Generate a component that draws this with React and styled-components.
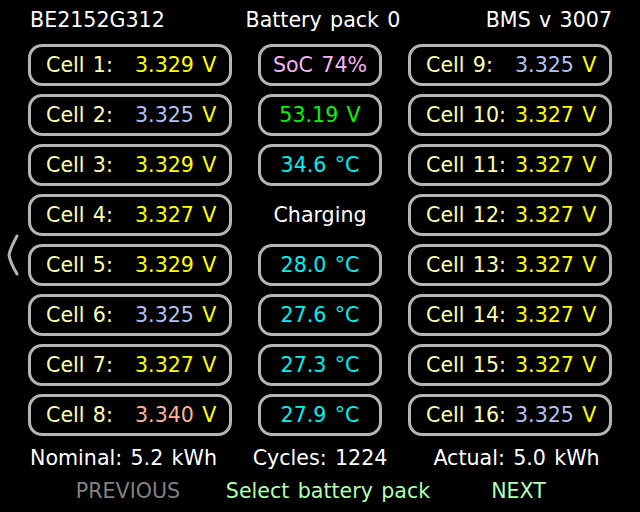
import styled, { createGlobalStyle } from "styled-components";

const GlobalStyle = createGlobalStyle`
  html, body {
    margin: 0;
    padding: 0;
    background: #000;
  }
  body {
    font-family: "DejaVu Sans", "Liberation Sans", sans-serif;
    font-size: 20.6px;
    word-spacing: 1.8px;
    color: #fff;
  }
`;

const Screen = styled.div`
  width: 640px;
  height: 512px;
  background: #000;
  overflow: hidden;
`;

const Header = styled.header`
  display: grid;
  grid-template-columns: 1fr auto 1fr;
  align-items: center;
  height: 41px;
  padding: 0 28px 0 30px;
  margin-bottom: 3px;
  line-height: 41px;
`;

const HeaderItem = styled.span`
  justify-self: ${(p) => p.$align || "center"};
  color: #fff;
  white-space: nowrap;
  ${(p) => p.$align === "center" && "padding-left: 4px;"}
`;

const Main = styled.div`
  display: flex;
`;

const Gutter = styled.div`
  width: 28px;
  flex: none;
`;

const Grid = styled.div`
  display: grid;
  grid-template-columns: 204px 124px 204px;
  grid-auto-rows: 42px;
  column-gap: 26px;
  row-gap: 8px;
`;

const Box = styled.div`
  box-sizing: border-box;
  border: 3px solid #b4b4b4;
  border-radius: 14px;
  display: flex;
  align-items: center;
  justify-content: ${(p) => (p.$center ? "center" : "flex-start")};
  padding: ${(p) => (p.$center ? "0" : "0 0 0 15px")};
  white-space: nowrap;
  color: ${(p) => p.$color || "#fff"};
`;

const Plain = styled.div`
  display: flex;
  align-items: center;
  justify-content: center;
  color: #fff;
`;

const Label = styled.span`
  width: 89px;
  flex: none;
  color: #ffffb0;
`;

const Num = styled.span`
  color: ${(p) => p.$color};
`;

const Unit = styled.span`
  color: #ffff00;
`;

const Footer = styled.div`
  display: grid;
  grid-template-columns: 247px 146px 247px;
  height: 44px;
  line-height: 44px;
  white-space: nowrap;
`;

const FooterItem = styled.span`
  justify-self: center;
`;

const Nav = styled.div`
  display: grid;
  grid-template-columns: 256px 144px 237px;
  height: 22px;
  line-height: 22px;
  white-space: nowrap;
`;

const NavItem = styled.span`
  justify-self: center;
  color: ${(p) => p.$color};
`;

const Chevron = styled.svg`
  display: block;
  margin-top: 190px;
`;

const valueColor = {
  hi: "#ffb098",
  lo: "#b4c0f4",
  ok: "#ffff00",
};

const cells = [
  ["3.329", "ok"],
  ["3.325", "lo"],
  ["3.329", "ok"],
  ["3.327", "ok"],
  ["3.329", "ok"],
  ["3.325", "lo"],
  ["3.327", "ok"],
  ["3.340", "hi"],
  ["3.325", "lo"],
  ["3.327", "ok"],
  ["3.327", "ok"],
  ["3.327", "ok"],
  ["3.327", "ok"],
  ["3.327", "ok"],
  ["3.327", "ok"],
  ["3.325", "lo"],
];

const middle = [
  { text: "SoC 74%", color: "#f4b4f4" },
  { text: "53.19 V", color: "#10f010" },
  { text: "34.6 °C", color: "#00f0f0" },
  { text: "Charging", plain: true },
  { text: "28.0 °C", color: "#00f0f0" },
  { text: "27.6 °C", color: "#00f0f0" },
  { text: "27.3 °C", color: "#00f0f0" },
  { text: "27.9 °C", color: "#00f0f0" },
];

function Cell({ n, value, kind }) {
  return (
    <Box>
      <Label>Cell {n}:</Label>
      <Num $color={valueColor[kind]}>{value}</Num>
      <Unit>&nbsp;V</Unit>
    </Box>
  );
}

export default function App() {
  const rows = [];
  for (let i = 0; i < 8; i++) {
    const m = middle[i];
    rows.push(
      <Cell key={`l${i}`} n={i + 1} value={cells[i][0]} kind={cells[i][1]} />
    );
    rows.push(
      m.plain ? (
        <Plain key={`m${i}`}>{m.text}</Plain>
      ) : (
        <Box key={`m${i}`} $center $color={m.color}>
          {m.text}
        </Box>
      )
    );
    rows.push(
      <Cell
        key={`r${i}`}
        n={i + 9}
        value={cells[i + 8][0]}
        kind={cells[i + 8][1]}
      />
    );
  }

  return (
    <Screen>
      <GlobalStyle />
      <Header>
        <HeaderItem $align="start">BE2152G312</HeaderItem>
        <HeaderItem $align="center">Battery pack 0</HeaderItem>
        <HeaderItem $align="end">BMS v 3007</HeaderItem>
      </Header>
      <Main>
        <Gutter>
          <Chevron width="28" height="44" viewBox="0 0 28 44">
            <path
              d="M17 2 Q10 15 9 21 Q10 28 17 40"
              fill="none"
              stroke="#b4b4b4"
              strokeWidth="3"
              strokeLinecap="round"
            />
          </Chevron>
        </Gutter>
        <Grid>{rows}</Grid>
        <Gutter />
      </Main>
      <Footer>
        <FooterItem>Nominal: 5.2 kWh</FooterItem>
        <FooterItem>Cycles: 1224</FooterItem>
        <FooterItem>Actual: 5.0 kWh</FooterItem>
      </Footer>
      <Nav>
        <NavItem $color="#808080">PREVIOUS</NavItem>
        <NavItem $color="#b0ffb0">Select battery pack</NavItem>
        <NavItem $color="#b0ffb0">NEXT</NavItem>
      </Nav>
    </Screen>
  );
}
